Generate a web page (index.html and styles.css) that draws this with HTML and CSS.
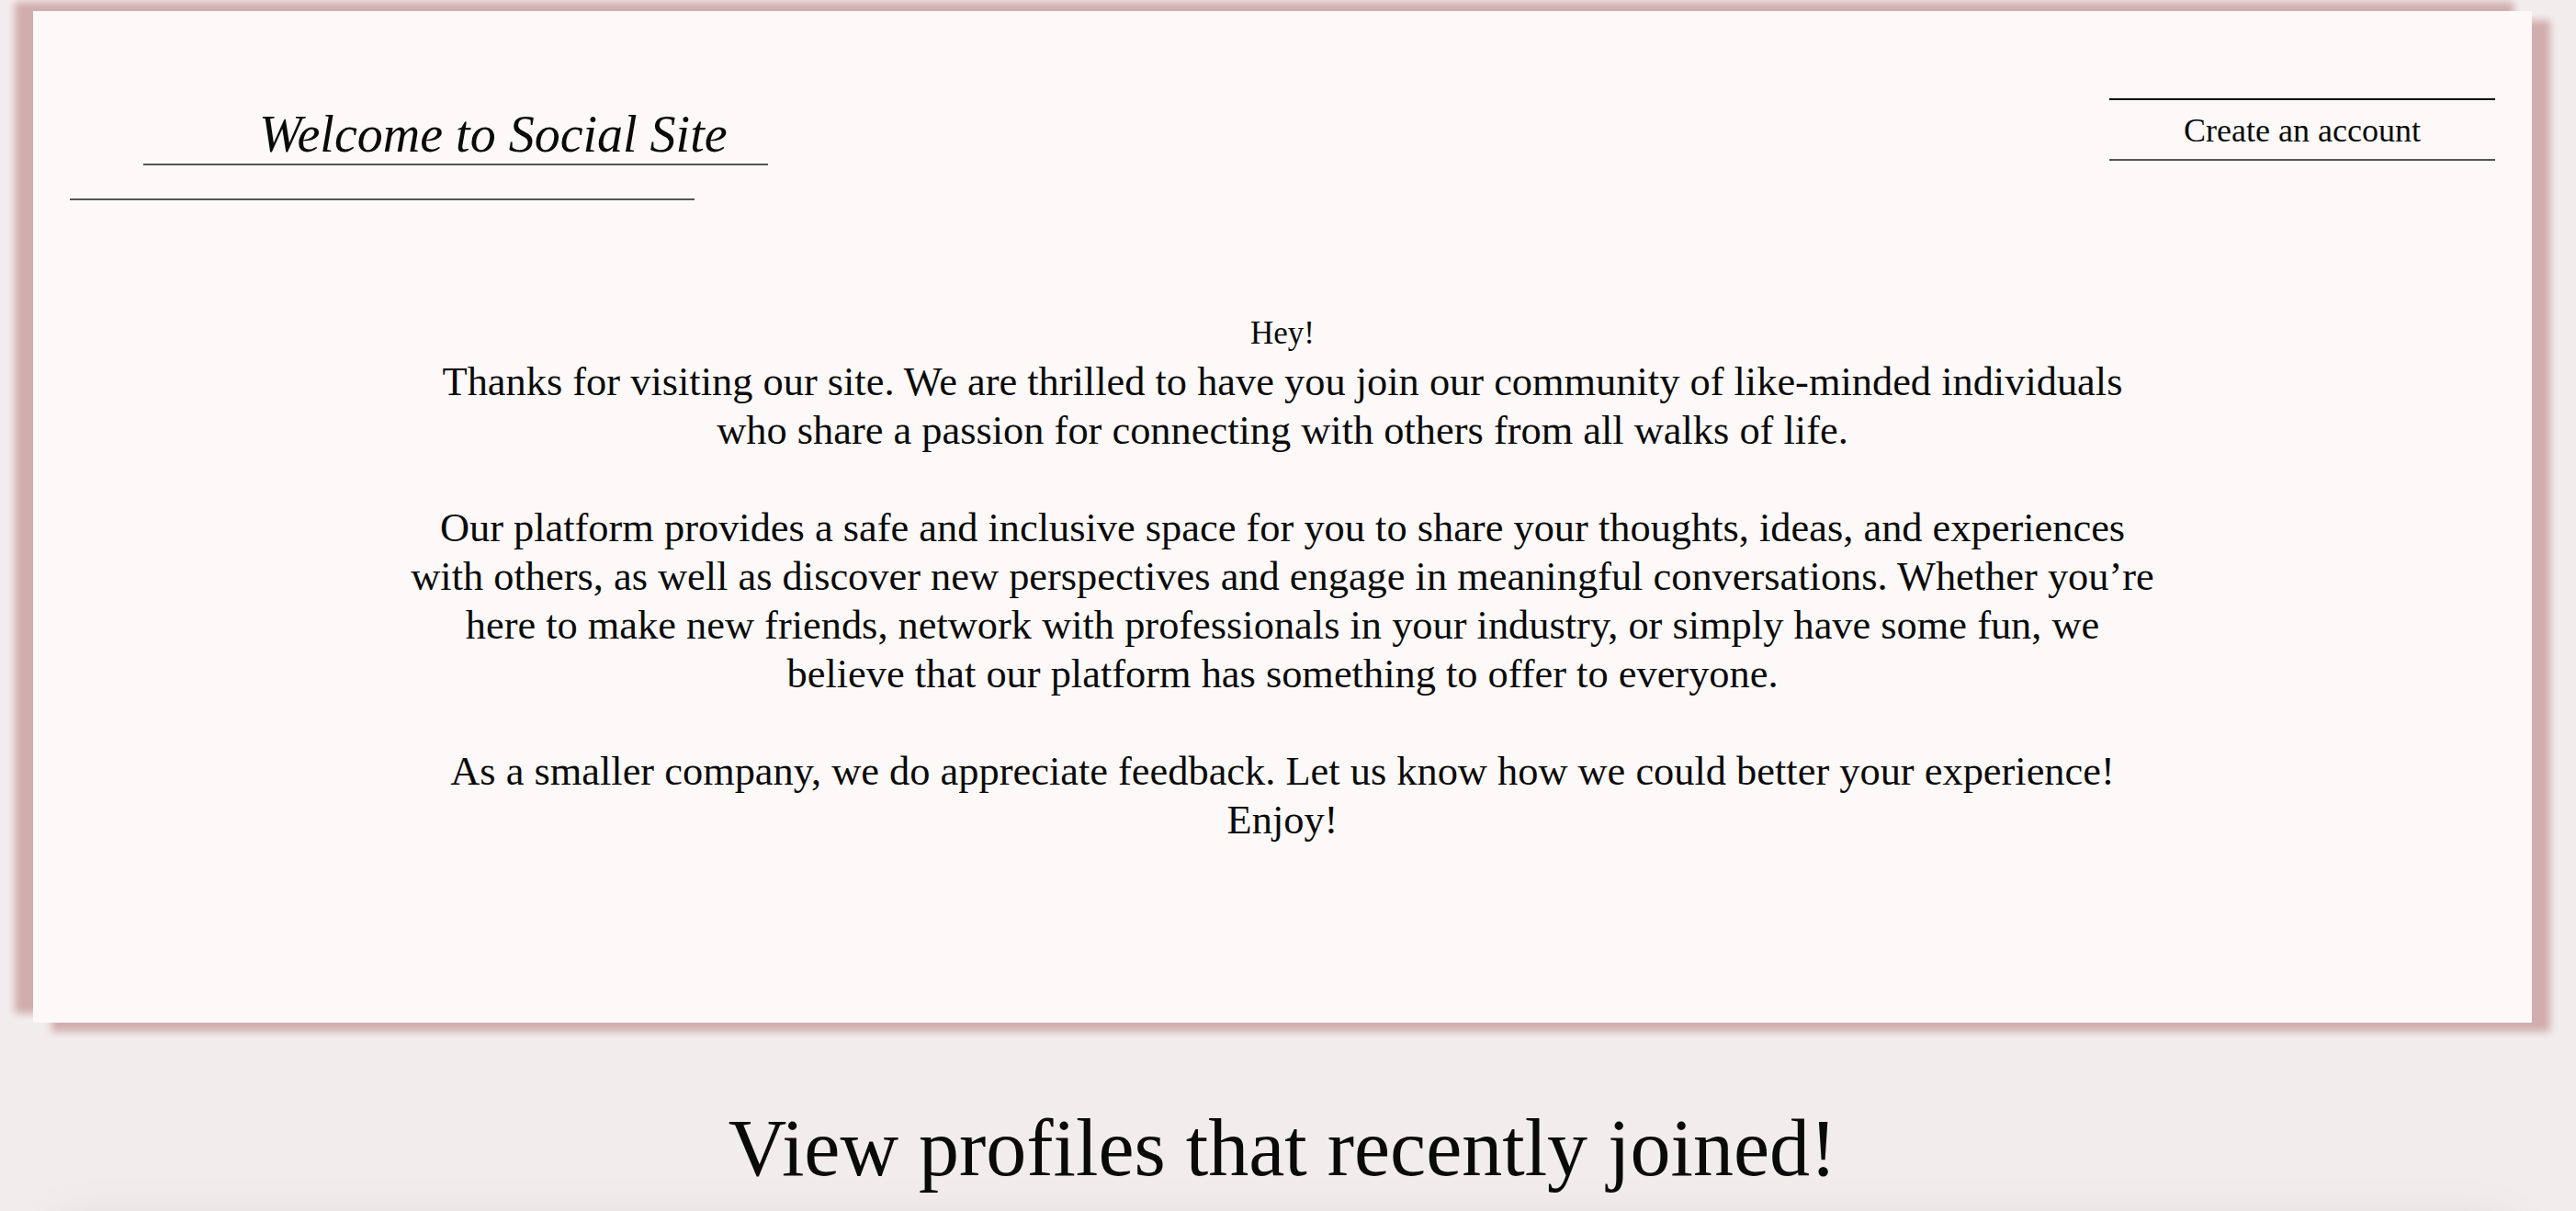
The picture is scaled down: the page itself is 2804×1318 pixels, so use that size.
FILE: index.html
```html
<!DOCTYPE html>
<html lang="en">
<head>
<meta charset="utf-8">
<title>Social Site</title>
<link rel="stylesheet" href="styles.css">
</head>
<body>
<main class="page">
  <section class="card">
    <header class="header">
      <div class="brand">
        <h1 class="brand-title">Welcome to Social Site</h1>
        <div class="brand-rule"></div>
      </div>
      <a class="signup" href="#">Create an account</a>
    </header>
    <p class="intro"><span class="hey">Hey!</span><br>Thanks for visiting our site. We are thrilled to have you join our community of like-minded individuals<br>who share a passion for connecting with others from all walks of life.<br><br>Our platform provides a safe and inclusive space for you to share your thoughts, ideas, and experiences<br>with others, as well as discover new perspectives and engage in meaningful conversations. Whether you’re<br>here to make new friends, network with professionals in your industry, or simply have some fun, we<br>believe that our platform has something to offer to everyone.<br><br>As a smaller company, we do appreciate feedback. Let us know how we could better your experience!<br>Enjoy!</p>
  </section>
  <h2 class="recent-title">View profiles that recently joined!</h2>
  <section class="profiles"></section>
</main>
</body>
</html>
```

FILE: styles.css
```css
html, body {
  margin: 0;
  padding: 0;
}

body {
  background: #f2eded;
  color: #0a0a0a;
  font-family: "Liberation Serif", "Times New Roman", serif;
  overflow: hidden;
}

.page {
  margin: 0 48px 0 36px;
  padding-top: 12px;
}

.card {
  background: #fdf9f8;
  box-shadow: -20px -10px 8px #d1adad, 20px 10px 8px #d1adad;
  padding: 0 40px 194px 40px;
}

.header {
  display: flex;
  justify-content: space-between;
  align-items: flex-start;
}

.brand {
  margin-top: 102px;
  width: 760px;
}

.brand-title {
  margin: 0 0 0 80px;
  width: 680px;
  box-sizing: border-box;
  padding-left: 126px;
  font-size: 56px;
  line-height: 64px;
  font-style: italic;
  font-weight: normal;
  border-bottom: 2px solid #555;
  white-space: nowrap;
}

.brand-rule {
  width: 680px;
  height: 2px;
  background: #555;
  margin-top: 36px;
}

.signup {
  margin-top: 95px;
  width: 420px;
  display: block;
  text-align: center;
  color: #0a0a0a;
  text-decoration: none;
  font-size: 36px;
  line-height: 61px;
  padding-top: 3px;
  border-top: 2px solid #000;
  border-bottom: 2px solid #555;
}

.intro {
  margin: 115px 0 0;
  text-align: center;
  font-size: 44.4px;
  line-height: 53px;
  white-space: nowrap;
}

.hey {
  font-size: 35px;
}

.recent-title {
  margin: 87px 0 0;
  text-align: center;
  font-size: 88px;
  line-height: 99px;
  font-weight: normal;
}

.profiles {
  margin: 40px 30px 0;
  height: 400px;
  background: #f2eded;
  box-shadow: 0 0 50px rgba(110, 90, 90, 0.22);
}
```
